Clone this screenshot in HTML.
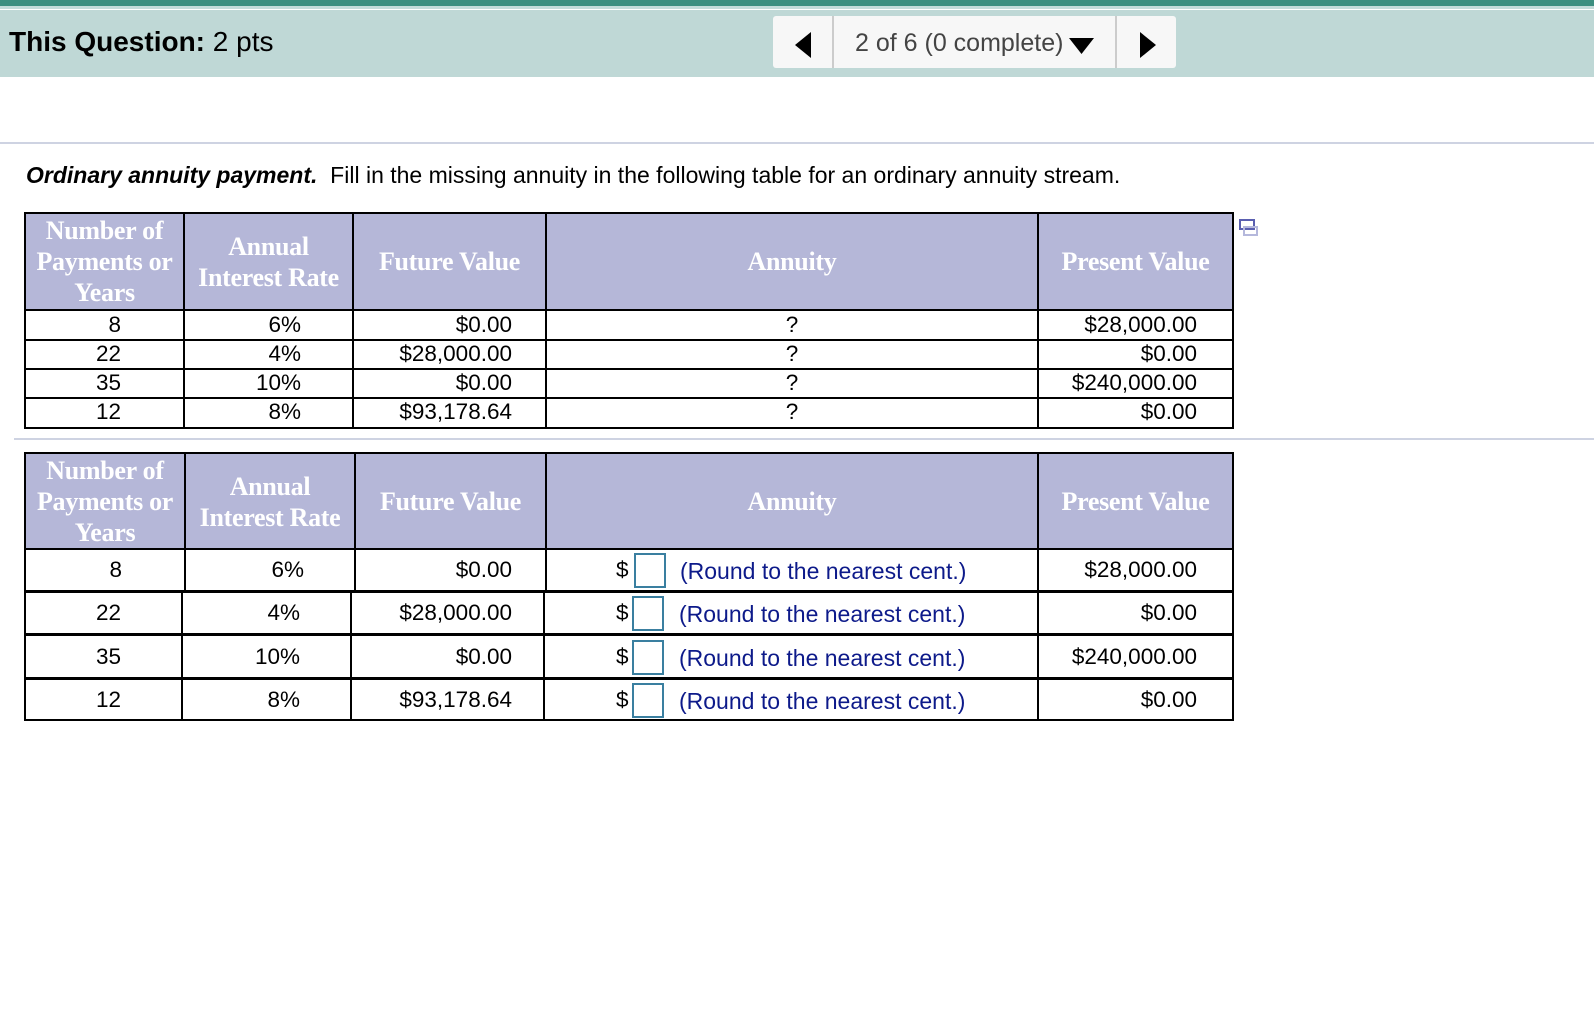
<!DOCTYPE html>
<html><head><meta charset="utf-8"><style>
body{margin:0;width:1594px;height:1028px;background:#fff;position:relative;overflow:hidden;font-family:"Liberation Sans",Arial,sans-serif;}
.a{position:absolute;}
.t{position:absolute;font-size:22.5px;color:#000;line-height:24px;white-space:nowrap;}
.r{text-align:right;}
.c{text-align:center;}
.h{position:absolute;background:#b5b7d8;color:#fff;font-family:"Liberation Serif",serif;font-weight:bold;font-size:26px;line-height:31px;display:flex;align-items:center;justify-content:center;text-align:center;white-space:nowrap;letter-spacing:-0.3px;}
.vl{position:absolute;background:#000;width:2px;}
.hl{position:absolute;background:#000;height:2px;}
.box{position:absolute;width:28px;height:31px;border:2px solid #3a7fa0;background:#fff;}
.nr{position:absolute;font-size:23px;color:#0d1a8a;line-height:26px;white-space:nowrap;}
</style></head><body>
<div class="a" style="left:0;top:0;width:1594px;height:6px;background:#3d8f80"></div>
<div class="a" style="left:0;top:6px;width:1594px;height:3px;background:#c5dcda"></div>
<div class="a" style="left:0;top:9px;width:1594px;height:1px;background:#fff"></div>
<div class="a" style="left:0;top:10px;width:1594px;height:67px;background:#bfd8d6"></div>
<div class="a" style="left:9px;top:26px;font-size:28px;line-height:32px;color:#000"><b>This Question:</b> 2 pts</div>
<div class="a" style="left:773px;top:16px;width:403px;height:52px;background:#f7f7f7;border-radius:3px"></div>
<div class="a" style="left:832px;top:16px;width:2px;height:52px;background:#ccc"></div>
<div class="a" style="left:1115px;top:16px;width:2px;height:52px;background:#ccc"></div>
<svg class="a" style="left:793px;top:31px" width="20" height="28"><path d="M18 1 L2 14 L18 27Z" fill="#000"/></svg>
<svg class="a" style="left:1138px;top:31px" width="20" height="28"><path d="M2 1 L18 14 L2 27Z" fill="#000"/></svg>
<div class="a" style="left:855px;top:29px;font-size:25px;line-height:28px;color:#444">2 of 6 (0 complete)</div>
<svg class="a" style="left:1068px;top:36px" width="28" height="20"><path d="M1 2 L26 2 L13.5 18Z" fill="#000"/></svg>
<div class="a" style="left:0;top:142px;width:1594px;height:2px;background:#ced3e2"></div>
<div class="a" style="left:26px;top:162px;font-size:23px;line-height:26px;color:#000"><b><i>Ordinary annuity payment.</i></b>&nbsp; Fill in the missing annuity in the following table for an ordinary annuity stream.</div>
<svg class="a" style="left:1239px;top:219px" width="22" height="18"><rect x="1" y="1" width="14" height="9" fill="#fff" stroke="#5a5fb0" stroke-width="2"/><rect x="5" y="8" width="13" height="8" fill="none" stroke="#b5b8dc" stroke-width="2"/></svg>

<!-- Table 1 -->
<div class="h" style="left:25px;top:213px;width:159px;height:97px">Number of<br>Payments or<br>Years</div>
<div class="h" style="left:184px;top:213px;width:169px;height:97px">Annual<br>Interest Rate</div>
<div class="h" style="left:353px;top:213px;width:193px;height:97px">Future Value</div>
<div class="h" style="left:546px;top:213px;width:492px;height:97px">Annuity</div>
<div class="h" style="left:1038px;top:213px;width:195px;height:97px">Present Value</div>
<div class="hl" style="left:24px;top:212px;width:1210px"></div>
<div class="hl" style="left:24px;top:309px;width:1210px"></div>
<div class="hl" style="left:24px;top:339px;width:1210px"></div>
<div class="hl" style="left:24px;top:368px;width:1210px"></div>
<div class="hl" style="left:24px;top:397px;width:1210px"></div>
<div class="hl" style="left:24px;top:427px;width:1210px"></div>
<div class="vl" style="left:24px;top:212px;height:217px"></div>
<div class="vl" style="left:183px;top:212px;height:217px"></div>
<div class="vl" style="left:352px;top:212px;height:217px"></div>
<div class="vl" style="left:545px;top:212px;height:217px"></div>
<div class="vl" style="left:1037px;top:212px;height:217px"></div>
<div class="vl" style="left:1232px;top:212px;height:217px"></div>

<div class="t r" style="left:30px;width:91px;top:313px">8</div>
<div class="t r" style="left:190px;width:111px;top:313px">6%</div>
<div class="t r" style="left:360px;width:152px;top:313px">$0.00</div>
<div class="t c" style="left:546px;width:492px;top:313px">?</div>
<div class="t r" style="left:1040px;width:157px;top:313px">$28,000.00</div>

<div class="t r" style="left:30px;width:91px;top:342px">22</div>
<div class="t r" style="left:190px;width:111px;top:342px">4%</div>
<div class="t r" style="left:360px;width:152px;top:342px">$28,000.00</div>
<div class="t c" style="left:546px;width:492px;top:342px">?</div>
<div class="t r" style="left:1040px;width:157px;top:342px">$0.00</div>

<div class="t r" style="left:30px;width:91px;top:371px">35</div>
<div class="t r" style="left:190px;width:111px;top:371px">10%</div>
<div class="t r" style="left:360px;width:152px;top:371px">$0.00</div>
<div class="t c" style="left:546px;width:492px;top:371px">?</div>
<div class="t r" style="left:1040px;width:157px;top:371px">$240,000.00</div>

<div class="t r" style="left:30px;width:91px;top:400px">12</div>
<div class="t r" style="left:190px;width:111px;top:400px">8%</div>
<div class="t r" style="left:360px;width:152px;top:400px">$93,178.64</div>
<div class="t c" style="left:546px;width:492px;top:400px">?</div>
<div class="t r" style="left:1040px;width:157px;top:400px">$0.00</div>

<div class="a" style="left:14px;top:438px;width:1580px;height:2px;background:#ced3e2"></div>

<!-- Table 2 -->
<div class="h" style="left:25px;top:453px;width:160px;height:97px">Number of<br>Payments or<br>Years</div>
<div class="h" style="left:185px;top:453px;width:170px;height:97px">Annual<br>Interest Rate</div>
<div class="h" style="left:355px;top:453px;width:191px;height:97px">Future Value</div>
<div class="h" style="left:546px;top:453px;width:492px;height:97px">Annuity</div>
<div class="h" style="left:1038px;top:453px;width:195px;height:97px">Present Value</div>
<div class="hl" style="left:24px;top:452px;width:1210px"></div>
<div class="hl" style="left:24px;top:548px;width:1210px"></div>
<div class="hl" style="left:24px;top:590px;width:1210px;height:3px"></div>
<div class="hl" style="left:24px;top:633px;width:1210px;height:3px"></div>
<div class="hl" style="left:24px;top:677px;width:1210px;height:3px"></div>
<div class="hl" style="left:24px;top:719px;width:1210px"></div>
<div class="vl" style="left:24px;top:452px;height:269px"></div>
<div class="vl" style="left:184px;top:452px;height:140px"></div>
<div class="vl" style="left:181px;top:592px;height:129px"></div>
<div class="vl" style="left:354px;top:452px;height:140px"></div>
<div class="vl" style="left:350px;top:592px;height:129px"></div>
<div class="vl" style="left:545px;top:452px;height:140px"></div>
<div class="vl" style="left:543px;top:592px;height:129px"></div>
<div class="vl" style="left:1037px;top:452px;height:269px"></div>
<div class="vl" style="left:1232px;top:452px;height:269px"></div>

<div class="t r" style="left:30px;width:92px;top:558px">8</div>
<div class="t r" style="left:190px;width:114px;top:558px">6%</div>
<div class="t r" style="left:360px;width:152px;top:558px">$0.00</div>
<div class="t" style="left:616px;top:558px">$</div>
<div class="box" style="left:634px;top:553px"></div>
<div class="nr" style="left:680px;top:558px">(Round to the nearest cent.)</div>
<div class="t r" style="left:1040px;width:157px;top:558px">$28,000.00</div>

<div class="t r" style="left:30px;width:91px;top:601px">22</div>
<div class="t r" style="left:190px;width:110px;top:601px">4%</div>
<div class="t r" style="left:360px;width:152px;top:601px">$28,000.00</div>
<div class="t" style="left:616px;top:601px">$</div>
<div class="box" style="left:632px;top:596px"></div>
<div class="nr" style="left:679px;top:601px">(Round to the nearest cent.)</div>
<div class="t r" style="left:1040px;width:157px;top:601px">$0.00</div>

<div class="t r" style="left:30px;width:91px;top:645px">35</div>
<div class="t r" style="left:190px;width:110px;top:645px">10%</div>
<div class="t r" style="left:360px;width:152px;top:645px">$0.00</div>
<div class="t" style="left:616px;top:645px">$</div>
<div class="box" style="left:632px;top:640px"></div>
<div class="nr" style="left:679px;top:645px">(Round to the nearest cent.)</div>
<div class="t r" style="left:1040px;width:157px;top:645px">$240,000.00</div>

<div class="t r" style="left:30px;width:91px;top:688px">12</div>
<div class="t r" style="left:190px;width:110px;top:688px">8%</div>
<div class="t r" style="left:360px;width:152px;top:688px">$93,178.64</div>
<div class="t" style="left:616px;top:688px">$</div>
<div class="box" style="left:632px;top:683px"></div>
<div class="nr" style="left:679px;top:688px">(Round to the nearest cent.)</div>
<div class="t r" style="left:1040px;width:157px;top:688px">$0.00</div>
</body></html>
